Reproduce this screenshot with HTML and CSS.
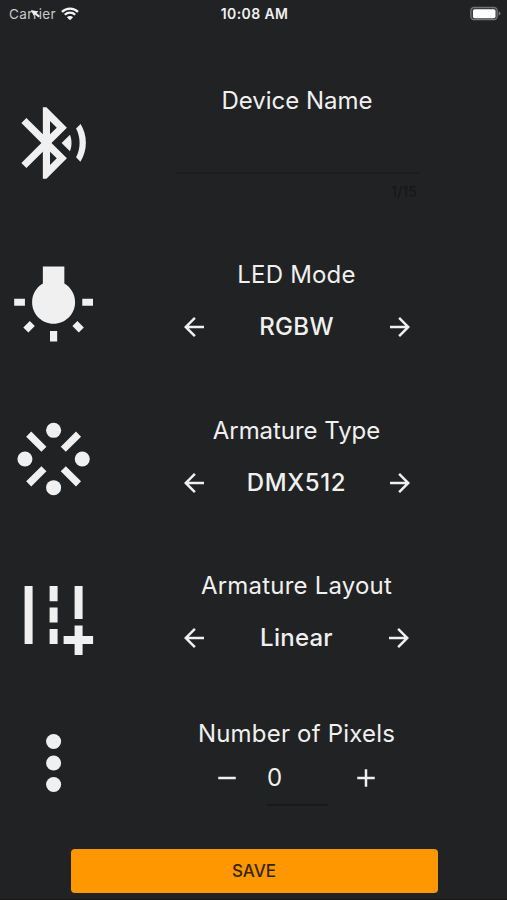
FILE: index.html
```html
<!DOCTYPE html>
<html lang="en">
<head>
<meta charset="utf-8">
<meta name="viewport" content="width=device-width, initial-scale=1">
<title>Device settings</title>
<link rel="stylesheet" href="styles.css">
</head>
<body>
<svg width="0" height="0" class="defs">
  <symbol id="back" viewBox="0 0 24 24"><path d="M20 11H7.83l5.59-5.59L12 4l-8 8 8 8 1.41-1.41L7.83 13H20v-2z"/></symbol>
  <symbol id="next" viewBox="0 0 24 24"><path d="M12 4l-1.41 1.41L16.17 11H4v2h12.17l-5.58 5.59L12 20l8-8z"/></symbol>
</svg>
<div class="screen">
  <header class="status">
    <div class="carrier"><span class="name">Carrier<svg class="cursor" viewBox="0 0 10 8"><path d="M0 0L7 1.5 5.5 3 9 6 7.5 7.5 4 4.5 2.5 5.5z"/></svg></span>
      <svg class="wifi" viewBox="0 0 18 14"><path d="M1 4.9a11.4 11.4 0 0 1 16 0M3.8 7.8a7.4 7.4 0 0 1 10.4 0"/><path class="dot" d="M9 13.2L5.9 10.2a4.4 4.4 0 0 1 6.2 0z"/></svg>
    </div>
    <div class="time">10:08 AM</div>
    <svg class="battery" viewBox="0 0 32 16"><rect class="shell" x=".8" y="1.3" width="26.4" height="12.4" rx="3.5"/><rect class="charge" x="3" y="3.2" width="22.5" height="9" rx="1.6"/><path class="tip" d="M28.6 5.2q2 .8 2 2.3t-2 2.3z"/></svg>
  </header>
  <main>
    <section class="row device">
      <svg class="icon" viewBox="0 0 24 24"><path d="M14.24 12.01l2.32 2.32c.28-.72.44-1.51.44-2.33 0-.82-.16-1.59-.43-2.31l-2.33 2.32zm5.29-5.3l-1.26 1.26c.63 1.21.98 2.57.98 4.02s-.36 2.82-.98 4.02l1.2 1.2c.97-1.54 1.54-3.36 1.54-5.31-.01-1.89-.55-3.67-1.48-5.19zm-3.82 1L10 2H9v7.59L4.41 5 3 6.41 8.59 12 3 17.59 4.41 19 9 14.41V22h1l5.71-5.71-4.3-4.29 4.3-4.29zM11 5.83l1.88 1.88L11 9.59V5.83zm1.88 10.46L11 18.17v-3.76l1.88 1.88z"/></svg>
      <div class="field">
        <h2 class="label name-label">Device Name</h2>
        <div class="name-input"></div>
        <div class="counter">1/15</div>
      </div>
    </section>
    <section class="row">
      <svg class="icon" viewBox="0 0 24 24"><path d="M3.55 18.54l1.41 1.41 1.8-1.79-1.41-1.41-1.8 1.79zM11 22.45h2V19.5h-2v2.95zM4 10.5H1v2h3v-2zm11-4.19V1.5H9v4.81C7.21 7.35 6 9.28 6 11.5c0 3.31 2.69 6 6 6s6-2.69 6-6c0-2.22-1.21-4.15-3-5.19zm5 4.19v2h3v-2h-3zm-2.76 7.66l1.79 1.8 1.41-1.41-1.8-1.79-1.4 1.4z"/></svg>
      <div class="field">
        <h2 class="label">LED Mode</h2>
        <div class="picker"><svg><use href="#back"/></svg><span class="value rgbw">RGBW</span><svg><use href="#next"/></svg></div>
      </div>
    </section>
    <section class="row">
      <svg class="icon" viewBox="0 0 24 24"><circle cx="12" cy="4" r="2.1"/><circle cx="20" cy="12" r="2.1"/><circle cx="12" cy="20" r="2.1"/><circle cx="4" cy="12" r="2.1"/><path class="ticks" d="M5.05 5.05l4.25 4.25M18.95 5.05L14.7 9.3M5.05 18.95L9.3 14.7M18.95 18.95L14.7 14.7"/></svg>
      <div class="field">
        <h2 class="label type">Armature Type</h2>
        <div class="picker"><svg><use href="#back"/></svg><span class="value dmx">DMX512</span><svg><use href="#next"/></svg></div>
      </div>
    </section>
    <section class="row">
      <svg class="icon" viewBox="0 0 86 86"><path d="M14 14h8v58h-8zM39 14h8v15.2h-8zM39 35.5h8v15h-8zM39 57h8v15h-8zM64 14h8v33h-8zM64 53.5h8V64h10.5v8H72v11h-8V72H53v-8h11z"/></svg>
      <div class="field">
        <h2 class="label layout">Armature Layout</h2>
        <div class="picker"><svg><use href="#back"/></svg><span class="value linear">Linear</span><svg><use href="#next"/></svg></div>
      </div>
    </section>
    <section class="row pixels">
      <svg class="icon" viewBox="0 0 24 24"><circle cx="12" cy="6" r="2.1"/><circle cx="12" cy="12" r="2.1"/><circle cx="12" cy="18" r="2.1"/></svg>
      <div class="field">
        <h2 class="label layout">Number of Pixels</h2>
        <div class="stepper">
          <svg viewBox="0 0 24 24"><path d="M5 11h14v2H5z"/></svg>
          <span class="number">0</span>
          <svg viewBox="0 0 24 24"><path d="M19 13h-6v6h-2v-6H5v-2h6V5h2v6h6z"/></svg>
        </div>
      </div>
    </section>
  </main>
  <button class="save">SAVE</button>
</div>
</body>
</html>
```
FILE: styles.css
```css
* { box-sizing: border-box; }

body {
  margin: 0;
  background: #212223;
  color: #f0f0f0;
  font-family: Inter, "Liberation Sans", sans-serif;
}

svg { display: block; fill: #f0f0f0; flex: none; }
.defs { position: absolute; }

.screen {
  width: 507px;
  height: 900px;
  overflow: hidden;
  display: flex;
  flex-direction: column;
  border-bottom: 1px solid #19191a;
}

.status {
  height: 28px;
  display: grid;
  grid-template-columns: 1fr auto 1fr;
  align-items: center;
  padding: 0 5px 0 9px;
  font-size: 13.5px;
  line-height: 16px;
}
.carrier { display: flex; align-items: center; gap: 5px; }
.name { position: relative; color: #c9c9c9; letter-spacing: 0.4px; }
.cursor { position: absolute; left: 22px; top: 4px; width: 10px; height: 8px; }
.wifi { width: 18px; height: 14px; }
.wifi path { fill: none; stroke: #f5f5f5; stroke-width: 2.3; }
.wifi .dot { fill: #f5f5f5; stroke: none; }
.time { font-weight: 600; font-size: 14px; letter-spacing: 0.4px; margin-right: 2px; }
.battery { width: 32px; height: 16px; justify-self: end; }
.shell { fill: #3b3c3d; stroke: #737475; stroke-width: 1.3; }
.charge { fill: #fff; }
.tip { fill: #737475; }

main { padding-top: 37.3px; }

.row {
  height: 155.6px;
  display: grid;
  grid-template-columns: 107px 379px;
  align-items: center;
}
.icon { width: 86px; height: 86px; justify-self: center; transform: translateX(-0.4px); }
.ticks { fill: none; stroke: #f0f0f0; stroke-width: 2; }

.field {
  display: flex;
  flex-direction: column;
  align-items: center;
  align-self: start;
  padding-top: 34.1px;
}
.label {
  margin: 0;
  font-weight: 400;
  font-size: 24px;
  line-height: 30px;
  letter-spacing: 0.2px;
  white-space: nowrap;
}
.name-label { letter-spacing: 0; }
.type { letter-spacing: -0.05px; }

.device { height: 160.6px; padding-bottom: 5px; }
.device .field { padding-top: 20.7px; padding-left: 1px; }
.name-input { width: 244px; height: 58px; border-bottom: 2px solid #1b1c1d; }
.counter {
  width: 244px;
  padding-right: 2px;
  margin-top: 9px;
  text-align: right;
  font-size: 14px;
  line-height: 18px;
  letter-spacing: 0.2px;
  color: #151617;
}

.picker {
  width: 236px;
  height: 30px;
  margin-top: 22.3px;
  display: flex;
  align-items: center;
  justify-content: space-between;
}
.picker svg, .stepper svg { width: 30px; height: 30px; }
.value { font-size: 24px; line-height: 30px; font-weight: 500; }
.rgbw { letter-spacing: 0.3px; }
.dmx { letter-spacing: 0.65px; }
.linear { letter-spacing: 0.25px; }

.pixels { height: 138px; padding-top: 3px; }
.pixels .field { padding-top: 23.3px; }
.stepper {
  width: 169px;
  height: 58px;
  margin-top: 14.4px;
  display: flex;
  align-items: flex-start;
}
.number {
  width: 62px;
  height: 43px;
  margin: 0 23px 0 25px;
  border-bottom: 2px solid #19191a;
  font-size: 24px;
  line-height: 30px;
}

.save {
  width: 367px;
  height: 44px;
  margin: 18px 0 0 70.5px;
  padding: 0;
  border: 0;
  border-radius: 4px;
  background: #ff9800;
  color: #37250a;
  font: 500 17px/44px Inter, "Liberation Sans", sans-serif;
}
```
